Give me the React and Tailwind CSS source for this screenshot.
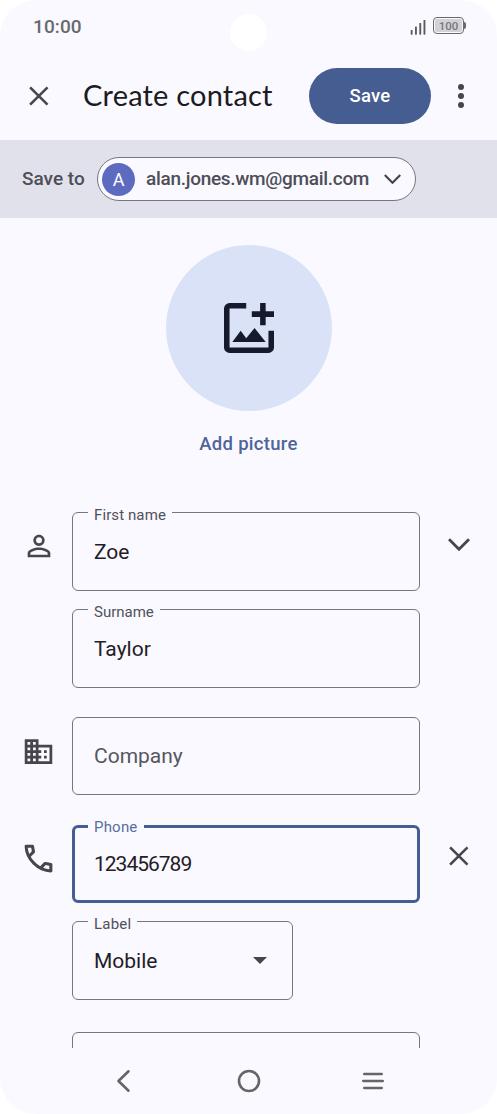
import React from 'react';
import { MdBusiness, MdPersonOutline } from 'react-icons/md';

const Close = () => (
  <svg className="block w-5 h-5" viewBox="0 0 20 20" fill="none" stroke="#45464f" strokeWidth="2.6">
    <path d="M1.1 1.3l17.4 17.4M18.5 1.3L1.1 18.7" />
  </svg>
);

const Chevron = ({ className }) => (
  <svg className={className} viewBox="0 0 22 14" fill="none" stroke="#45464f" strokeWidth="2.8">
    <path d="M1 1.3l10 10 10-10" />
  </svg>
);

const Phone = () => (
  <svg className="w-[37px] h-[37px] mt-[15px]" viewBox="0 0 24 24" fill="currentColor">
    <path d="M19.95 21q-3.125 0-6.175-1.3625T8.225 15.775 4.3625 10.225 3 4.05q0-.45.3-.75t.75-.3H8.1q.35 0 .625.2375t.325.5625l.65 3.5q.05.4-.025.675T9.4 8.45L6.975 10.9q.5.925 1.1875 1.7875T9.675 14.35q.775.775 1.625 1.4375T13.1 17l2.35-2.35q.225-.225.5875-.3375T16.75 14.25l3.45.7q.35.1.575.3625T21 15.9v4.05q0 .45-.3.75t-.75.3zM6.025 9l1.65-1.65L7.25 5H5.025q.125 1.025.35 2.025T6.025 9zm8.95 8.95q.975.425 1.9875.675T19 18.95v-2.2l-2.35-.475-1.675 1.675z" />
  </svg>
);

const Field = ({ label, value, placeholder, active, className = '', labelClass = '', valueClass = '', children }) => (
  <div
    className={`relative flex items-center justify-between rounded-[6px] ${active ? 'h-[78px] pl-[19px] border-[3px] border-[#465d91]' : 'pl-[21px] border border-[#767680]'} ${className}`}
  >
    {label && (
      <span
        className={`absolute px-[6px] bg-[#faf9ff] text-[15px] leading-[18px] whitespace-nowrap ${active ? 'left-[13px] -top-[10px] text-[#596e9e]' : 'left-[15px] -top-[7px] text-[#50515a]'} ${labelClass}`}
      >
        {label}
      </span>
    )}
    <span className={`text-[21px] leading-6 whitespace-nowrap ${placeholder ? 'text-[#55565e]' : 'text-[#1f2025]'} ${valueClass}`}>
      {value || placeholder}
    </span>
    {children}
  </div>
);

const Row = ({ icon, action, className = '', children }) => (
  <div className={`grid grid-cols-[72px_348px_77px] ${className}`}>
    <div className="flex justify-center pl-[5px] text-[#45464f]">{icon}</div>
    <div>{children}</div>
    <div className="flex justify-center">{action}</div>
  </div>
);

const StatusBar = () => (
  <div className="flex items-start h-[52px] pl-[33px]">
    <span className="w-[197px] mt-[15px] text-[19px] leading-6 font-medium text-[#69696c] tracking-[0.1px]">10:00</span>
    <div className="w-[37px] h-[37px] mt-[14px] rounded-full bg-white" />
    <div className="flex items-start mt-[17px] ml-[143px]">
      <svg className="w-4 h-[15px] mt-[3px] mr-[7px]" viewBox="0 0 16 15" fill="#5c5c60">
        <rect x="0.7" y="10" width="1.9" height="4.7" rx="0.6" />
        <rect x="5" y="6.5" width="1.9" height="8.2" rx="0.6" />
        <rect x="9.3" y="3" width="1.9" height="11.7" rx="0.6" />
        <rect x="13.5" y="0" width="1.9" height="14.7" rx="0.6" />
      </svg>
      <div className="flex items-center">
        <div className="w-[31px] h-[17px] p-[1px] rounded-[4px] border-[1.5px] border-[#69696c]">
          <div className="h-full rounded-[2px] bg-[#d2d2d6] text-[11.5px] leading-[14px] font-medium text-[#77777b] text-center">100</div>
        </div>
        <div className="w-[2px] h-[7px] rounded-r bg-[#69696c]" />
      </div>
    </div>
  </div>
);

const App = () => {
  return (
    <div className="w-[497px] h-[1114px] overflow-hidden bg-white">
      <div className="flex flex-col h-full rounded-[36px] overflow-hidden bg-[#faf9ff] font-[Roboto,sans-serif]">
        <header className="h-[140px] shrink-0">
          <StatusBar />
          <div className="flex items-center h-[88px] pl-[29px]">
            <Close />
            <h1 className="w-[226px] ml-[34px] pb-[2px] font-[Lato,sans-serif] text-[29px] leading-9 tracking-[0.2px] text-[#1b1b21] whitespace-nowrap">Create contact</h1>
            <button className="w-[122px] h-14 pt-[2px] rounded-full bg-[#465d91] text-white text-[18.5px] font-medium tracking-[0.2px]">Save</button>
            <div className="flex flex-col gap-[2.6px] ml-[27px]">
              <div className="w-[6px] h-[6px] rounded-full bg-[#45464f]" />
              <div className="w-[6px] h-[6px] rounded-full bg-[#45464f]" />
              <div className="w-[6px] h-[6px] rounded-full bg-[#45464f]" />
            </div>
          </div>
        </header>

        <div className="flex items-center h-[77.5px] shrink-0 pl-[22px] pt-[1px] bg-[#e1e1eb] text-[#4d4e57] text-[19px] font-medium">
          <span className="w-[75px] whitespace-nowrap">Save to</span>
          <div className="flex items-center w-[319px] h-[44px] pl-[4px] rounded-full border border-[#767680] bg-[#faf9ff]">
            <div className="w-[33px] h-[33px] rounded-full bg-[#5c6bc0] text-white text-[18px] font-normal leading-[34px] text-center">A</div>
            <span className="w-[238px] ml-[11px] whitespace-nowrap tracking-[-0.3px]">alan.jones.wm@gmail.com</span>
            <Chevron className="w-[17px] h-[11px]" />
          </div>
        </div>

        <main className="h-[830px] shrink-0 overflow-hidden">
          <div className="flex flex-col items-center h-[294.5px] pt-[27.5px]">
            <div className="flex items-center justify-center w-[166px] h-[166px] rounded-full bg-[#dae2f8]">
              <svg className="w-[50px] h-[50px]" viewBox="0 0 18 18" fill="#151b2c">
                <path d="M2 0h6v2H2v14h14v-6h2v6a2 2 0 0 1-2 2H2a2 2 0 0 1-2-2V2a2 2 0 0 1 2-2z" />
                <path d="M13 0h2v3h3v2h-3v3h-2V5h-3V3h3z" />
                <path d="M3 14l3-4 2 2.7L11 9l4 5z" />
              </svg>
            </div>
            <span className="mt-[21px] text-[18.5px] leading-6 font-medium tracking-[0.3px] text-[#4f659a]">Add picture</span>
          </div>

          <Row
            icon={<MdPersonOutline className="w-[34px] h-[34px] mt-[17px]" />}
            action={<Chevron className="w-[22px] h-[14px] mt-[26px]" />}
          >
            <Field label="First name" value="Zoe" className="h-[79px]" labelClass="tracking-[0.1px]" />
          </Row>
          <Row className="mt-[18px]">
            <Field label="Surname" value="Taylor" className="h-[79px]" />
          </Row>
          <Row className="mt-[29px]" icon={<MdBusiness className="w-[33px] h-[33px] mt-[18px]" />}>
            <Field placeholder="Company" className="h-[78px]" />
          </Row>
          <Row
            className="mt-[30px]"
            icon={<Phone />}
            action={<div className="mt-[21px]"><Close /></div>}
          >
            <Field label="Phone" value="123456789" active valueClass="tracking-[-1px]" labelClass="tracking-[0.2px]" />
          </Row>
          <Row className="mt-[18px]">
            <Field label="Label" value="Mobile" className="w-[221px] h-[79px] pr-[25px]" labelClass="tracking-[0.2px]">
              <svg className="w-[14px] h-[7px]" viewBox="0 0 14 7" fill="#45464f">
                <path d="M0 0h14L7 7z" />
              </svg>
            </Field>
          </Row>
          <Row className="mt-[32px]">
            <Field className="h-[79px]" />
          </Row>
        </main>

        <nav className="flex items-center justify-between h-[66.5px] px-[113px]">
          <svg className="w-[22px] h-6" viewBox="0 0 22 24" fill="none" stroke="#656568" strokeWidth="2.6" strokeLinecap="round" strokeLinejoin="round">
            <path d="M15.5 2.3L5.5 12l10 9.7" />
          </svg>
          <svg className="w-6 h-6" viewBox="0 0 24 24" fill="none" stroke="#656568" strokeWidth="2.6">
            <circle cx="12" cy="12" r="10" />
          </svg>
          <svg className="w-[22px] h-5" viewBox="0 0 22 20" fill="none" stroke="#656568" strokeWidth="2.6" strokeLinecap="round">
            <path d="M2.3 3h17.4M1.3 10h19.4M2.3 17h17.4" />
          </svg>
        </nav>
      </div>
    </div>
  );
};

export default App;
